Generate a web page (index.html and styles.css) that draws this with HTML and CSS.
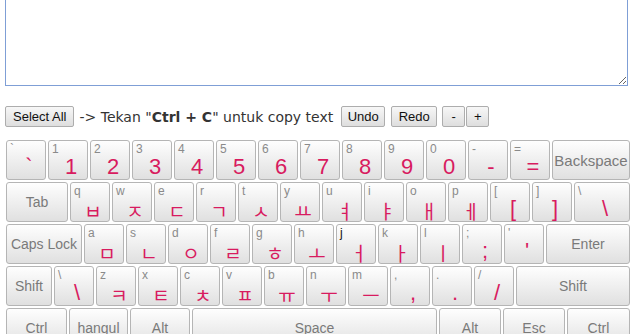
FILE: index.html
```html
<!DOCTYPE html>
<html>
<head>
    <title>Keyboard Hangul</title>
    <link rel="stylesheet" href="styles.css">
</head>
<body>
    <!-- Text area -->
    <textarea class="editor" id="editor"></textarea>

    <!-- Tools -->
    <div class="tools">
        <button class="btn">Select All</button>
        <span class="hint">-&gt; Tekan "<b>Ctrl + C</b>" untuk copy text</span>
        <button class="btn undo">Undo</button>
        <button class="btn redo">Redo</button>
        <button class="btn small minus">-</button>
        <button class="btn small">+</button>
    </div>

    <!-- Keyboard -->
    <div class="keyboard">
        <div class="row">
            <div class="key"><span class="sub">`</span><span class="main">`</span></div>
            <div class="key"><span class="sub">1</span><span class="main">1</span></div>
            <div class="key"><span class="sub">2</span><span class="main">2</span></div>
            <div class="key"><span class="sub">3</span><span class="main">3</span></div>
            <div class="key"><span class="sub">4</span><span class="main">4</span></div>
            <div class="key"><span class="sub">5</span><span class="main">5</span></div>
            <div class="key"><span class="sub">6</span><span class="main">6</span></div>
            <div class="key"><span class="sub">7</span><span class="main">7</span></div>
            <div class="key"><span class="sub">8</span><span class="main">8</span></div>
            <div class="key"><span class="sub">9</span><span class="main">9</span></div>
            <div class="key"><span class="sub">0</span><span class="main">0</span></div>
            <div class="key"><span class="sub">-</span><span class="main">-</span></div>
            <div class="key"><span class="sub">=</span><span class="main">=</span></div>
            <div class="key func big fill">Backspace</div>
        </div>
        <div class="row">
            <div class="key func tab">Tab</div>
            <div class="key"><span class="sub">q</span><span class="main ko">ㅂ</span></div>
            <div class="key"><span class="sub">w</span><span class="main ko">ㅈ</span></div>
            <div class="key"><span class="sub">e</span><span class="main ko">ㄷ</span></div>
            <div class="key"><span class="sub">r</span><span class="main ko">ㄱ</span></div>
            <div class="key"><span class="sub">t</span><span class="main ko">ㅅ</span></div>
            <div class="key"><span class="sub">y</span><span class="main ko">ㅛ</span></div>
            <div class="key"><span class="sub">u</span><span class="main ko">ㅕ</span></div>
            <div class="key"><span class="sub">i</span><span class="main ko">ㅑ</span></div>
            <div class="key"><span class="sub">o</span><span class="main ko">ㅐ</span></div>
            <div class="key"><span class="sub">p</span><span class="main ko">ㅔ</span></div>
            <div class="key"><span class="sub">[</span><span class="main">[</span></div>
            <div class="key"><span class="sub">]</span><span class="main">]</span></div>
            <div class="key fill"><span class="sub">\</span><span class="main">\</span></div>
        </div>
        <div class="row">
            <div class="key func caps">Caps Lock</div>
            <div class="key"><span class="sub">a</span><span class="main ko">ㅁ</span></div>
            <div class="key"><span class="sub">s</span><span class="main ko">ㄴ</span></div>
            <div class="key"><span class="sub">d</span><span class="main ko">ㅇ</span></div>
            <div class="key"><span class="sub">f</span><span class="main ko">ㄹ</span></div>
            <div class="key"><span class="sub">g</span><span class="main ko">ㅎ</span></div>
            <div class="key"><span class="sub">h</span><span class="main ko">ㅗ</span></div>
            <div class="key"><span class="sub dark">j</span><span class="main ko">ㅓ</span></div>
            <div class="key"><span class="sub">k</span><span class="main ko">ㅏ</span></div>
            <div class="key"><span class="sub">l</span><span class="main ko">ㅣ</span></div>
            <div class="key"><span class="sub">;</span><span class="main">;</span></div>
            <div class="key"><span class="sub">'</span><span class="main">'</span></div>
            <div class="key func fill">Enter</div>
        </div>
        <div class="row">
            <div class="key func shift">Shift</div>
            <div class="key"><span class="sub">\</span><span class="main">\</span></div>
            <div class="key"><span class="sub">z</span><span class="main ko">ㅋ</span></div>
            <div class="key"><span class="sub">x</span><span class="main ko">ㅌ</span></div>
            <div class="key"><span class="sub">c</span><span class="main ko">ㅊ</span></div>
            <div class="key"><span class="sub">v</span><span class="main ko">ㅍ</span></div>
            <div class="key"><span class="sub">b</span><span class="main ko">ㅠ</span></div>
            <div class="key"><span class="sub">n</span><span class="main ko">ㅜ</span></div>
            <div class="key"><span class="sub">m</span><span class="main ko">ㅡ</span></div>
            <div class="key"><span class="sub">,</span><span class="main">,</span></div>
            <div class="key"><span class="sub">.</span><span class="main">.</span></div>
            <div class="key"><span class="sub">/</span><span class="main">/</span></div>
            <div class="key func fill">Shift</div>
        </div>
        <div class="row">
            <div class="key func ctrl">Ctrl</div>
            <div class="key func hangul">hangul</div>
            <div class="key func alt">Alt</div>
            <div class="key func space">Space</div>
            <div class="key func alt-r">Alt</div>
            <div class="key func esc">Esc</div>
            <div class="key func fill">Ctrl</div>
        </div>
    </div>
</body>
</html>
```

FILE: styles.css
```css
body {
    margin: 0;
    padding: 0;
    background: #fff;
    font-family: "DejaVu Sans", Verdana, sans-serif;
    color: #333;
    overflow: hidden;
}

/* Text area */
.editor {
    display: block;
    box-sizing: border-box;
    width: 623px;
    height: 126px;
    margin: -40px 0 0 5px;
    border: 1px solid #7f9fd6;
    resize: both;
    outline: none;
}

/* Tools */
.tools {
    display: flex;
    align-items: center;
    margin: 20px 0 0 5px;
    height: 21px;
}
.btn {
    box-sizing: border-box;
    height: 21px;
    padding: 0 7px;
    border: 1px solid #adadad;
    border-radius: 2px;
    background: linear-gradient(#f7f7f7, #dedede);
    font: 13px "Liberation Sans", Arial, sans-serif;
    color: #111;
}
.hint {
    font-size: 14px;
    margin: 0 8px 0 5px;
    color: #333;
}
.undo { width: 44px; padding: 0; }
.redo { width: 46px; padding: 0; margin-left: 6px; }
.small { width: 23px; padding: 0; margin-left: 1px; }
.minus { margin-left: 5px; }

/* Keyboard */
.keyboard {
    margin: 12px 0 0 5px;
    width: 626px;
}
.row {
    display: flex;
}
.key {
    box-sizing: border-box;
    width: 40px;
    height: 40px;
    margin: 1px;
    border: 1px solid #b5b5b5;
    border-radius: 3px;
    background: linear-gradient(#fefefe, #e0e0e0);
    display: flex;
    flex-direction: column;
    flex-shrink: 0;
}
.key .sub {
    font: 12px/12px "Liberation Sans", Arial, sans-serif;
    color: #8a8a8a;
    padding: 2px 0 0 3px;
}
.key .sub.dark {
    color: #111;
}
.key .main {
    font: 22px/24px "Liberation Sans", Arial, sans-serif;
    color: #d81b5f;
    text-align: center;
    padding-left: 6px;
}
.key .main.ko {
    font: 19px/24px "Noto Sans CJK KR", sans-serif;
    padding-top: 2px;
}
.key.func {
    align-items: center;
    justify-content: center;
    font: 14px "Liberation Sans", Arial, sans-serif;
    color: #7a7a7a;
}
.key.func.big { font-size: 15px; }
.key.fill { flex: 1; width: auto; }
.key.tab { width: 62px; }
.key.caps { width: 76px; }
.key.shift { width: 46px; }
.key.ctrl { width: 61px; }
.key.hangul { width: 59px; }
.key.alt { width: 60px; }
.key.space { width: 245px; }
.key.alt-r, .key.esc { width: 62px; }
```
